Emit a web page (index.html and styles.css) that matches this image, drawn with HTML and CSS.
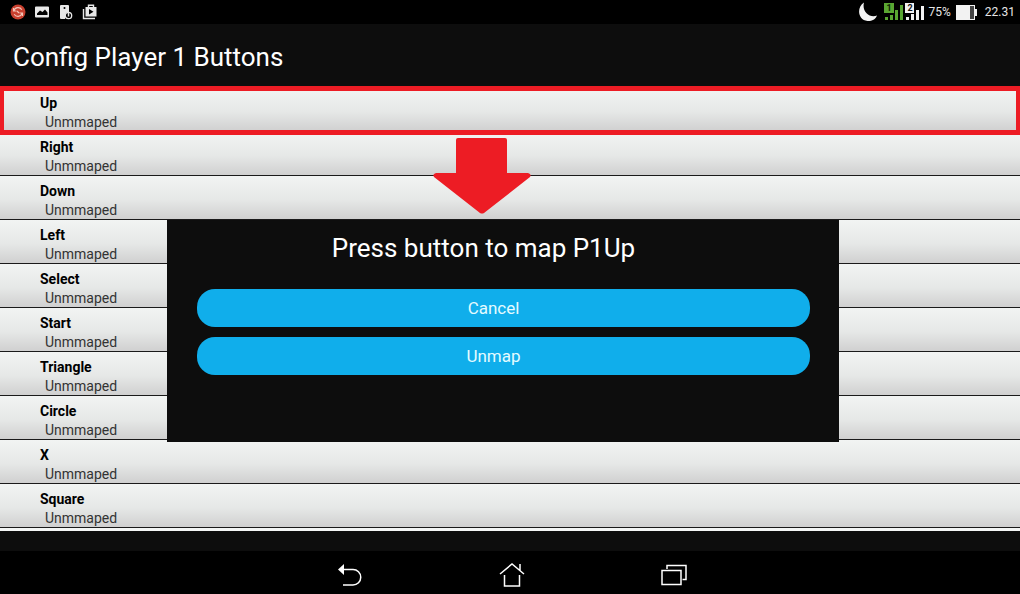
FILE: index.html
```html
<!DOCTYPE html>
<html lang="en">
<head>
	<meta charset="utf-8">
	<title>Config Player 1 Buttons</title>
	<link rel="stylesheet" href="styles.css">
</head>
<body>

	<div class="statusbar">
		<div class="notifications">
			<svg width="16" height="16" viewBox="0 0 16 16">
				<circle cx="8" cy="8" r="7.500" fill="#c9402f"/>
				<path d="M4 6.500a4.300 4.300 0 0 1 7.800-.8M12 9.500a4.300 4.300 0 0 1-7.800.8M3.500 4v3h3M12.500 12V9h-3M7 7l2 2" fill="none" stroke="#f3c4b8" stroke-width="1.200"/>
			</svg>
			<svg width="16" height="16" viewBox="0 0 16 16">
				<path fill="#e8e8e8" fill-rule="evenodd" d="M2 2.500h12q1 0 1 1v9q0 1-1 1H2q-1 0-1-1v-9q0-1 1-1zM3 11h10.500V8.500L11 5.500 8.500 8 6 6.500 3 9.500z"/>
			</svg>
			<svg width="16" height="16" viewBox="0 0 16 16">
				<path fill="#e8e8e8" d="M3 1h7q1 0 1 1v6H9.500L7 11v4H3q-1 0-1-1V2q0-1 1-1z"/>
				<circle cx="6.500" cy="4" r="1" fill="#000"/>
				<circle cx="10.500" cy="11.500" r="3.200" fill="#000" stroke="#e8e8e8" stroke-width="1.300"/>
				<path d="M10.500 9v3.500" stroke="#e8e8e8" stroke-width="1.500"/>
			</svg>
			<svg width="16" height="16" viewBox="0 0 16 16">
				<path d="M1.500 5v9.500H13" fill="none" stroke="#e8e8e8" stroke-width="1.400"/>
				<path d="M6.500 3V1.200h5V3" fill="none" stroke="#e8e8e8" stroke-width="1.400"/>
				<path fill="#e8e8e8" fill-rule="evenodd" d="M3.500 3h11v9.500h-11zM7 5v5.500l4.500-2.700z"/>
			</svg>
		</div>
		<div class="system">
			<svg class="moon" width="20" height="20" viewBox="0 0 20 20">
				<path fill="#f2f2f2" d="M6 .500C-1.500 5 -.5 18 9.500 19c4 .3 8-1.500 9.500-5.500C12 16.500 3.500 10 6 .500z"/>
			</svg>
			<div class="signals">
				<svg width="19" height="18" viewBox="0 0 19 18">
					<path fill="#5aa632" d="M0 0h10v10H0zM1 14h3v3H1zM6 12h3v5H6zM11 7h3v10h-3zM16 2h3v15h-3z"/>
					<text x="5" y="8" class="sim" fill="#0b2400">1</text>
				</svg>
				<svg width="19" height="18" viewBox="0 0 19 18">
					<path fill="#f2f2f2" d="M0 0h9v10H0zM1 14h3v3H1zM6 11h3v6H6zM11 7h3v10h-3zM16 3h3v14h-3z"/>
					<text x="5" y="8" class="sim" fill="#111">2</text>
				</svg>
			</div>
			<span>75%</span>
			<svg class="battery" width="22" height="15" viewBox="0 0 22 15">
				<path fill="#f2f2f2" d="M0 0h14v15H0z"/>
				<path fill="#444" d="M14 1h4v13h-4z"/>
				<path fill="#f2f2f2" d="M14 0h5v4h2v7h-2v4h-5v-1h4V1h-4z"/>
			</svg>
			<span>22.31</span>
		</div>
	</div>

	<h1 class="title">Config Player 1 Buttons</h1>

	<div class="content">
		<ul class="list">
			<li><button class="row selected"><b>Up</b><span>Unmmaped</span></button></li>
			<li><button class="row"><b>Right</b><span>Unmmaped</span></button></li>
			<li><button class="row"><b>Down</b><span>Unmmaped</span></button></li>
			<li><button class="row"><b>Left</b><span>Unmmaped</span></button></li>
			<li><button class="row"><b>Select</b><span>Unmmaped</span></button></li>
			<li><button class="row"><b>Start</b><span>Unmmaped</span></button></li>
			<li><button class="row"><b>Triangle</b><span>Unmmaped</span></button></li>
			<li><button class="row"><b>Circle</b><span>Unmmaped</span></button></li>
			<li><button class="row"><b>X</b><span>Unmmaped</span></button></li>
			<li><button class="row"><b>Square</b><span>Unmmaped</span></button></li>
		</ul>

		<!-- arrow and map dialog, both over the list -->
		<div class="overlay">
			<svg class="arrow" width="98" height="77" viewBox="0 0 98 77">
				<path fill="#ed1c24" d="M25 0h47q2 0 2 2v33h21q4 1 2 4L51 75q-2 1-4 0L1 39q-2-3 2-4h20V2q0-2 2-2z"/>
			</svg>
			<div class="dialog" role="dialog" aria-labelledby="maptitle">
				<h2 id="maptitle">Press button to map P1Up</h2>
				<button class="mapbutton">Cancel</button>
				<button class="mapbutton">Unmap</button>
			</div>
		</div>
	</div>

	<div class="navbar">
		<button class="nav" aria-label="Back">
			<svg width="26" height="26" viewBox="0 0 26 26">
				<path d="M6 7.500h10a7.700 7.700 0 0 1 0 15.500H6" fill="none" stroke="#fff" stroke-width="1.500"/>
				<path fill="#fff" d="M1 7.500L7 2v11z"/>
			</svg>
		</button>
		<button class="nav" aria-label="Home">
			<svg width="26" height="26" viewBox="0 0 26 26">
				<path d="M1 12L13 2l12 10M21 8.500V2M5.500 13v11h15V13" fill="none" stroke="#fff" stroke-width="1.500"/>
			</svg>
		</button>
		<button class="nav" aria-label="Recent apps">
			<svg width="26" height="26" viewBox="0 0 26 26">
				<path d="M1 8.500h19v14H1zM6 7V3.500h19v14h-3.500" fill="none" stroke="#fff" stroke-width="1.500"/>
			</svg>
		</button>
	</div>

</body>
</html>
```
FILE: styles.css
```css
*{box-sizing:border-box;}
body{margin:0; min-height:100vh; display:flex; flex-direction:column; background-color:#0d0d0d; color:#fff; font-family:Roboto, "Liberation Sans", sans-serif;}
button{font-family:inherit; border:0; margin:0; cursor:pointer;}
svg{display:block;}

.statusbar{display:flex; justify-content:space-between; height:24px; padding:0 5px 0 10px; background-color:#000; font-size:12px; line-height:24px; color:#e6e6e6;}
.notifications{display:flex; align-items:center; gap:8px;}
.system{display:flex; align-items:center; gap:5px;}
.moon{margin-right:1px;}
.signals{display:flex; gap:2px;}
.sim{font-size:9px; font-weight:700; text-anchor:middle;}
.battery{margin-right:2px;}

.title{margin:0; padding:0 13px; height:64px; font-size:26px; line-height:66px; font-weight:400;}

.content{position:relative; margin-bottom:auto;}
.list{margin:0; padding:0 0 3px; list-style:none; background-color:#f4f6f5;}
.row{position:relative; display:flex; flex-direction:column; width:100%; height:44px; padding:6px 40px 0; text-align:left; font-size:14px; line-height:19px; color:#000; background:linear-gradient(#f2f4f3, #e6e8e7 55%, #d0d0d0); border-bottom:1px solid #1a1a1a;}
.row span{padding-left:5px; color:#333;}
.selected::after{content:""; position:absolute; top:-2px; right:0; bottom:-4px; left:0; z-index:1; border:solid #ed1c24; border-width:5px 4px;}

.overlay{position:absolute; top:50px; left:0; right:0; display:flex; flex-direction:column; align-items:center; gap:5px; padding-right:14px;}
.arrow{margin-right:42px;}
.dialog{display:flex; flex-direction:column; gap:10px; width:66.8%; min-height:222px; padding:0 29px 0 30px; background-color:#0d0d0d;}
.dialog h2{margin:0; padding:13px 40px 16px 0; text-align:center; font-size:26px; line-height:30px; font-weight:400;}
.mapbutton{height:38px; padding:0 20px 0 0; font-size:17px; color:#e4fbff; background-color:#10aeeb; border-radius:18px;}

.navbar{display:flex; justify-content:center; height:43px; padding:4px 0 0 4px; background-color:#000; gap:136px;}
.nav{padding:0; background:none;}
```
